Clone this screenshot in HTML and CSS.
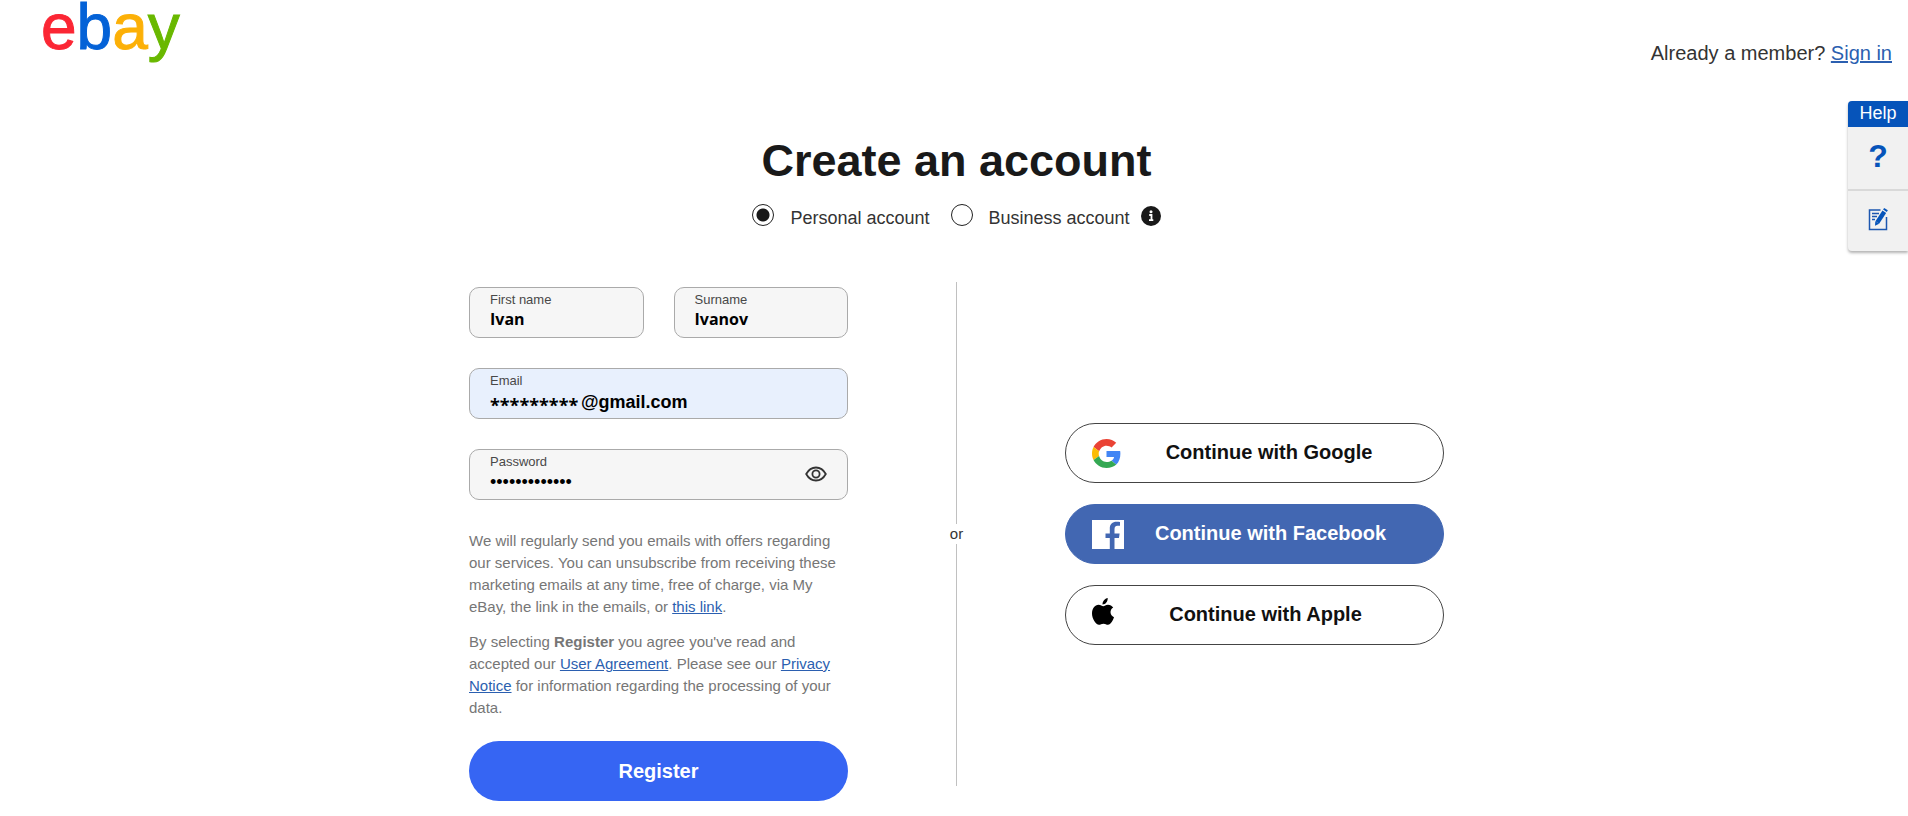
FILE: index.html
```html
<!DOCTYPE html>
<html lang="en">
<head>
  <meta charset="UTF-8">
  <meta name="viewport" content="width=device-width, initial-scale=1">
  <title>Create an account | eBay</title>
  <link rel="stylesheet" href="styles.css">
</head>
<body>
  <header class="header">
    <a class="logo" href="#" aria-label="eBay"><span class="logo-e">e</span><span class="logo-b">b</span><span class="logo-a">a</span><span class="logo-y">y</span></a>
    <p class="member">Already a member? <a href="#">Sign in</a></p>
  </header>

  <!-- Help -->
  <aside class="help">
    <div class="help-title">Help</div>
    <button class="help-btn" type="button">?</button>
    <button class="help-btn" type="button" aria-label="Send feedback">
      <svg width="20" height="24" viewBox="0 0 20 24" fill="none" stroke="#1d57b0">
        <path d="M12.500 3H1.500V22.500H18.500V10" stroke-width="1.500"/>
        <path d="M4 6.500h7M4 9.500h5M4 12.500h3" stroke-width="1.500"/>
        <path d="M9.300 15.500L16.300 4.800" stroke="#0654ba" stroke-width="4.400"/>
        <path d="M16.900 3.800L18 2.100" stroke="#0654ba" stroke-width="4.400"/>
        <path d="M7.300 14.300L7 18.800L11.200 16.700Z" fill="#0654ba" stroke="none"/>
      </svg>
    </button>
  </aside>

  <main class="main">
    <h1>Create an account</h1>

    <div class="account-type">
      <label class="radio"><input type="radio" name="type" checked>Personal account</label>
      <label class="radio"><input type="radio" name="type">Business account</label>
      <button class="info" type="button" aria-label="About business accounts">
        <svg width="20" height="20" viewBox="0 0 20 20">
          <circle cx="10" cy="10" r="10" fill="#191919"/>
          <circle cx="10" cy="5.800" r="1.500" fill="#fff"/>
          <path d="M8.200 9h2.300v4.500M8 14.200h4.300" fill="none" stroke="#fff" stroke-width="1.800"/>
        </svg>
      </button>
    </div>

    <div class="columns">
      <form class="form">
        <div class="names">
          <div class="field">
            <label for="firstname">First name</label>
            <input type="text" id="firstname" value="Ivan">
          </div>
          <div class="field">
            <label for="surname">Surname</label>
            <input type="text" id="surname" value="Ivanov">
          </div>
        </div>

        <div class="field filled">
          <label for="email">Email</label>
          <div class="email-row">
            <input type="text" id="email" value="*********">
            <span>@gmail.com</span>
          </div>
        </div>

        <div class="field password">
          <div class="password-text">
            <label for="password">Password</label>
            <input type="password" id="password" value="ivanov1234567">
          </div>
          <button class="show-btn" type="button" aria-label="Show password">
            <svg width="22" height="16" viewBox="0 0 22 16" fill="none" stroke="#333" stroke-width="1.800">
              <path d="M1.200 8C3.500 3.800 7 1.500 11 1.500S18.500 3.800 20.800 8C18.500 12.200 15 14.500 11 14.500S3.500 12.200 1.200 8Z"/>
              <circle cx="11" cy="8" r="3.600"/>
            </svg>
          </button>
        </div>

        <div class="legal">
          <p>We will regularly send you emails with offers regarding our services. You can unsubscribe from receiving these marketing emails at any time, free of charge, via My eBay, the link in the emails, or <a href="#">this link</a>.</p>
          <p>By selecting <b>Register</b> you agree you've read and accepted our <a href="#">User Agreement</a>. Please see our <a href="#">Privacy Notice</a> for information regarding the processing of your data.</p>
        </div>

        <button class="btn register" type="submit">Register</button>
      </form>

      <div class="divider">or</div>

      <div class="social">
        <button class="btn" type="button">
          <svg width="29" height="29" viewBox="0 0 48 48">
            <path fill="#EA4335" d="M24 11c3.300 0 6.200 1.150 8.400 3.200l7.700-7.800C35.900 2.380 30.470 0 24 0 14.620 0 6.510 5.380 2.560 13.220l9.300 7.200C13.600 15 18.200 11 24 11z"/>
            <path fill="#4285F4" d="M46.980 24.550c0-1.570-.15-3.090-.38-4.550H24v9.600h12.500c-.58 2.700-2 4.700-4.300 6.300l8 6.500c4.510-4.180 6.780-10.560 6.780-17.850z"/>
            <path fill="#FBBC05" d="M11.700 28c-.4-1.300-.6-2.600-.6-4s.24-2.600.7-3.800l-9.240-7C.92 16.460 0 20.120 0 24c0 3.880.92 7.540 2.560 10.780z"/>
            <path fill="#34A853" d="M24 48c6.480 0 12.200-2.130 16.200-5.600l-8-6.500c-2.150 1.300-4.900 2-8.200 2-5.800 0-10.500-4-12.300-9.900l-9.140 6.780C6.510 42.620 14.620 48 24 48z"/>
          </svg>
          <span>Continue with Google</span>
        </button>
        <button class="btn facebook" type="button">
          <svg width="32" height="29" viewBox="0 0 32 29">
            <path fill="#fff" d="M0 0H32V29H22.500V18H27L27.600 13.500H22.500V9.500C22.500 7 23.300 5.800 25.500 5.800H28V2C27 1.800 25.800 1.700 24.500 1.700C20.500 1.700 17.800 4 17.800 8.500V13.500H13.500V18H17.800V29H0Z"/>
          </svg>
          <span>Continue with Facebook</span>
        </button>
        <button class="btn apple" type="button">
          <svg width="22" height="27" viewBox="0 0 22 27">
            <path d="M15.700 0C15.900 3.700 13.300 6.600 10.500 6.500C10.300 3.300 12.900 .5 15.700 0Z"/>
            <path d="M11.300 8.200C12.500 8.200 13.700 6.800 16 6.800C18.200 6.800 20 7.900 21.200 9.600C17.200 12 17.900 17.600 22 19.200C21.200 21.500 18.800 26.800 16 26.800C14.200 26.800 13.600 25.700 11.500 25.700C9.300 25.700 8.600 26.800 7 26.800C3.800 26.800 0 20.700 0 15.600C0 10.400 3 6.800 6.500 6.800C8.700 6.800 10.100 8.200 11.300 8.200Z"/>
          </svg>
          <span>Continue with Apple</span>
        </button>
      </div>
    </div>
  </main>
</body>
</html>
```

FILE: styles.css
```css
* {
  box-sizing: border-box;
}

body {
  margin: 0;
  background: #fff;
  color: #333;
  font-family: "Liberation Sans", Arial, sans-serif;
}

a {
  color: #2b5fb0;
}

p,
h1 {
  margin: 0;
}

button {
  font: inherit;
  cursor: pointer;
}

svg {
  display: block;
  flex: none;
}

/* Header */
.header {
  display: flex;
  justify-content: space-between;
  align-items: flex-end;
  height: 65px;
  padding: 0 16px 0 41px;
}

.logo {
  align-self: flex-start;
  font-size: 64px;
  line-height: 54px;
  text-decoration: none;
  -webkit-text-stroke: 1px;
}

.logo-e { color: #fb2634; }
.logo-b { color: #0462d7; }
.logo-a { color: #fcb007; }
.logo-y { color: #69b800; }

.member {
  font-size: 20px;
  line-height: 24px;
}

/* Help */
.help {
  position: absolute;
  top: 101px;
  right: 0;
  width: 60px;
  border-radius: 4px 0 0 4px;
  background: #f1f1f1;
  box-shadow: 0 2px 3px rgba(0, 0, 0, 0.3);
  overflow: hidden;
}

.help-title {
  height: 26px;
  line-height: 24px;
  background: #0654ba;
  color: #fff;
  font-size: 18px;
  text-align: center;
}

.help-btn {
  display: flex;
  align-items: center;
  justify-content: center;
  width: 100%;
  height: 62px;
  padding: 0 0 4px;
  border: 0;
  background: none;
  color: #0654ba;
  font-size: 32px;
  font-weight: bold;
}

.help-btn + .help-btn {
  border-top: 2px solid #d9d9d9;
}

/* Title and account type */
.main {
  padding: 70px 24px 16px 29px;
}

h1 {
  color: #191919;
  font-size: 45px;
  line-height: 52px;
  text-align: center;
}

.account-type {
  display: flex;
  justify-content: center;
  align-items: center;
  margin-top: 13px;
}

.radio {
  display: flex;
  align-items: center;
  margin-right: 21px;
  font-size: 18px;
  line-height: 26px;
  padding-top: 4px;
}

.radio + .radio {
  margin-right: 11px;
}

.radio input {
  appearance: none;
  width: 22px;
  height: 22px;
  margin: 0 16px 6px 0;
  border: 1px solid #222;
  border-radius: 50%;
}

.radio input:checked {
  background: radial-gradient(circle, #191919 6px, #fff 7px);
}

.info {
  padding: 0;
  border: 0;
  background: none;
}

/* Columns */
.columns {
  display: grid;
  grid-template-columns: 1fr 217px 1fr;
  max-width: 975px;
  margin: 50px auto 0;
}

.form {
  display: flex;
  flex-direction: column;
  gap: 30px;
  padding-top: 5px;
}

.names {
  display: grid;
  grid-template-columns: 1fr 1fr;
  gap: 30px;
}

.field {
  height: 51px;
  padding: 4px 20px 0;
  border: 1px solid #aaa;
  border-radius: 10px;
  background: #f6f6f6;
}

.field label {
  display: block;
  color: #484848;
  font-size: 13px;
  line-height: 16px;
}

.field input {
  display: block;
  width: 100%;
  height: 22px;
  padding: 0;
  border: 0;
  outline: 0;
  background: none;
  color: #000;
  font: bold 16px "Open Sans", sans-serif;
}

.filled {
  background: #e8f0fd;
}

.email-row {
  display: flex;
  align-items: center;
  height: 26px;
  color: #000;
  font-size: 18px;
  font-weight: bold;
}

.email-row input {
  width: 91px;
  font-size: 18px;
  padding-top: 6px;
}

.password {
  display: flex;
  align-items: flex-start;
}

.password-text {
  flex: 1;
}

.password-text input {
  height: 24px;
  font: 18px "Liberation Sans", Arial, sans-serif;
}

.show-btn {
  margin-top: 12px;
  padding: 0;
  border: 0;
  background: none;
}

.legal {
  color: #767676;
  font-size: 15px;
  line-height: 22px;
}

.legal p + p {
  margin-top: 13px;
}

.btn {
  display: flex;
  align-items: center;
  width: 100%;
  height: 60px;
  padding: 0 26px;
  border: 1px solid #444;
  border-radius: 30px;
  background: #fff;
  color: #111;
  font-size: 20px;
  font-weight: bold;
}

.register {
  justify-content: center;
  margin-top: -8px;
  border: 0;
  background: #3665f3;
  color: #fff;
}

/* Divider */
.divider {
  display: flex;
  flex-direction: column;
  align-items: center;
  margin-bottom: 15px;
  font-size: 15px;
  line-height: 20px;
}

.divider::before,
.divider::after {
  content: "";
  flex: 1;
  border-left: 1px solid #c0c0c0;
}

/* Social buttons */
.social {
  display: flex;
  flex-direction: column;
  justify-content: center;
  gap: 21px;
  margin-bottom: 15px;
}

.social .btn span {
  flex: 1;
  padding-bottom: 2px;
}

.social .facebook {
  border-color: #4267b2;
  background: #4267b2;
  color: #fff;
}

.apple svg {
  margin-bottom: 8px;
}

@media (max-width: 900px) {
  .columns {
    grid-template-columns: 1fr;
    gap: 20px;
  }
}
```
